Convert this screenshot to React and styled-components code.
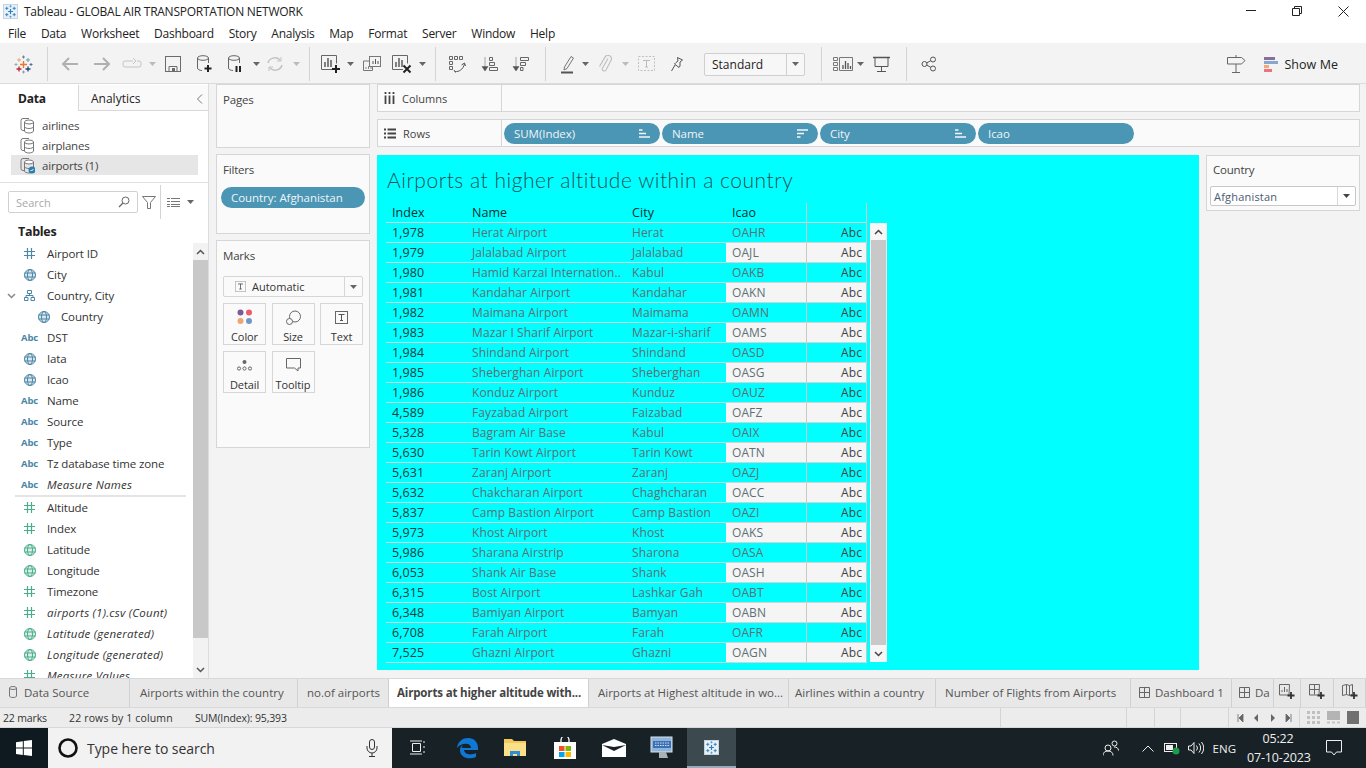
import React from "react";
import styled, { createGlobalStyle } from "styled-components";

const Global = createGlobalStyle`
  html, body { margin: 0; padding: 0; background: #fff; }
  * { box-sizing: border-box; }
  body { font-family: "Open Sans", "Noto Sans", sans-serif; font-size: 12px; color: #222; }
`;

const Page = styled.div`
  width: 1366px; height: 768px; overflow: hidden; display: flex; flex-direction: column; background: #f3f3f3;
`;
const TitleBar = styled.div`
  height: 24px; background: #fff; display: flex; align-items: center; padding: 0 0 2px 3px; font-size: 12px; letter-spacing: -0.25px; color: #222; flex: none;
`;
const TitleText = styled.span` margin-left: 6px; `;
const WinControls = styled.div` margin-left: auto; display: flex; `;
const WinBtn = styled.div` width: 46px; height: 22px; display: flex; align-items: center; justify-content: center; `;
const MenuBar = styled.div`
  height: 19px; background: #fff; display: flex; flex: none; align-items: center; padding-left: 8px; gap: 14.9px; letter-spacing: -0.25px;
`;
const ToolBar = styled.div`
  height: 41px; flex: none; display: flex; align-items: center; padding: 2px 0 0 4px; background: #f3f3f3; border-bottom: 1px solid #dcdcdc;
`;
const Tool = styled.div`
  width: ${p => p.$w}px; height: 24px; flex: none; display: flex; align-items: center; justify-content: center;
`;
const SepBox = styled.div`
  width: ${p => p.$w}px; flex: none; height: 34px; display: flex; justify-content: center;
  &::before { content: ""; width: 1px; height: 100%; background: #d4d4d4; }
`;
const StdBox = styled.div`
  width: 101px; height: 23px; margin: 0 6px 0 16px; border: 1px solid #cfcfcf; border-radius: 2px; display: flex; align-items: center; background: #f7f7f7; flex: none;
`;
const StdText = styled.span` flex: 1; padding-left: 7px; font-size: 12px; `;
const StdCaret = styled.span` width: 18px; height: 100%; border-left: 1px solid #cfcfcf; display: flex; align-items: center; justify-content: center; `;
const ToolRight = styled.div` margin-left: auto; display: flex; align-items: center; padding-right: 28px; font-size: 12.5px; letter-spacing: 0.05px; `;
const ShowMeText = styled.span` margin-left: 6px; `;

const Main = styled.div` height: 594px; flex: none; display: flex; `;
const LeftPanel = styled.div`
  width: 209px; flex: none; background: #fff; border-right: 1px solid #dcdcdc; display: flex; flex-direction: column; overflow: hidden;
`;
const TabsRow = styled.div` height: 26px; flex: none; display: flex; margin-top: 1px; `;
const DataTab = styled.div` width: 78px; padding-left: 18px; font-weight: 700; line-height: 27px; letter-spacing: -0.2px; `;
const AnalyticsTab = styled.div`
  flex: 1; display: flex; align-items: center; justify-content: space-between; padding: 2px 5px 0 12px; background: #fafafa; border-left: 1px solid #d8d8d8; border-bottom: 1px solid #d8d8d8;
`;
const Sources = styled.div` flex: none; padding: 4px 10px 7px 11px; border-bottom: 1px solid #e2e2e2; `;
const SourceRow = styled.div`
  height: 20px; display: flex; align-items: center; padding-left: 9px; gap: 7px; color: #444; letter-spacing: -0.2px; font-size: 11.5px;
  background: ${p => (p.$on ? "#e6e6e6" : "transparent")};
`;
const SearchRow = styled.div` height: 39px; flex: none; display: flex; align-items: flex-start; padding: 8px 0 0 8px; `;
const SearchBox = styled.div`
  width: 130px; height: 22px; border: 1px solid #d0d0d0; border-radius: 2px; display: flex; align-items: center; justify-content: space-between; padding: 0 7px 0 7px; color: #a9a9a9; font-size: 11px;
`;
const SearchTools = styled.div` display: flex; align-items: center; height: 22px; margin-left: 1px; `;
const TablesHead = styled.div` flex: none; height: 21px; padding-left: 18px; font-weight: 700; line-height: 20px; letter-spacing: -0.3px; font-size: 12.5px; `;
const FieldArea = styled.div` flex: 1; min-height: 0; display: flex; overflow: hidden; `;
const FieldList = styled.div` flex: 1; padding-top: 0; overflow: hidden; `;
const FieldRow = styled.div`
  height: 21px; display: flex; align-items: center; padding-left: ${p => (p.$indent ? 34 : p.$chev ? 7 : 20)}px; gap: 8px; letter-spacing: ${p => (p.$i ? "0.25px" : "-0.12px")}; font-size: 11.5px; color: #333;
  font-style: ${p => (p.$i ? "italic" : "normal")};
`;
const ChevronSlot = styled.span` width: 5px; flex: none; display: flex; `;
const IconSlot = styled.span` width: 19px; flex: none; display: flex; justify-content: center; align-items: center; `;
const Abc = styled.span` font-size: 9.5px; font-weight: 700; color: #4a86a6; font-style: normal; letter-spacing: -0.2px; `;
const FieldDivider = styled.div` height: 2px; margin: 0 7px 0 15px; background: #e4e4e4; `;
const VScroll = styled.div` display: flex; flex-direction: column; flex: none; width: ${p => p.$w}px; background: ${p => p.$bg}; `;
const ScrollArrow = styled.div` height: ${p => p.$h}px; flex: none; display: flex; align-items: center; justify-content: center; `;
const ScrollThumb = styled.div` flex: ${p => (p.$h ? `none` : 1)}; height: ${p => (p.$h ? `${p.$h}px` : "auto")}; background: #c8c8c8; margin: 0 ${p => p.$m || 0}px; `;
const ScrollTail = styled.div` flex: 1; `;

const SideCol = styled.div` width: 154px; margin-left: 7px; flex: none; display: flex; flex-direction: column; gap: 6px; `;
const Card = styled.div`
  height: ${p => p.$h}px; flex: none; background: #fafafa; border: 1px solid #d6d6d6; padding: ${p => p.$p || "7px 6px"};
`;
const CardLabel = styled.div` color: #444; height: 16px; line-height: 16px; letter-spacing: -0.2px; font-size: 11.5px; `;
const Pill = styled.div`
  height: 21px; width: ${p => p.$w}px; flex: none; border-radius: 11px; background: #4b96b4; color: #eef5f8; display: flex; align-items: center; justify-content: space-between; padding: 0 10px; letter-spacing: -0.05px; font-size: 11.5px;
`;
const FilterPill = styled(Pill)` margin: 9px 0 0 -2px; `;
const MarksSelect = styled.div`
  margin-top: 12px; height: 21px; width: 140px; border: 1px solid #d6d6d6; border-radius: 2px; display: flex; align-items: center; font-size: 11px; color: #333;
`;
const MarksSelectText = styled.span` flex: 1; display: flex; align-items: center; gap: 6px; padding-left: 11px; `;
const MarksCaret = styled.span` width: 18px; height: 100%; border-left: 1px solid #d6d6d6; display: flex; align-items: center; justify-content: center; `;
const MarksGrid = styled.div` margin-top: 6px; width: 140px; display: grid; grid-template-columns: 43px 43px 43px; column-gap: 5.5px; row-gap: 6px; `;
const MarkBtn = styled.div`
  height: 42px; border: 1px solid #d6d6d6; display: flex; flex-direction: column; align-items: center; justify-content: flex-end; padding-bottom: 0; font-size: 11px; letter-spacing: -0.1px; color: #333; background: #fafafa;
`;
const MarkIcon = styled.div` height: 22px; display: flex; align-items: center; justify-content: center; margin-bottom: 1px; `;

const Work = styled.div` width: 983px; margin-left: 7px; flex: none; display: flex; flex-direction: column; `;
const Shelf = styled.div`
  height: 28px; flex: none; display: flex; background: #fafafa; border: 1px solid #d6d6d6; margin-bottom: ${p => p.$mb}px;
`;
const ShelfHead = styled.div` width: 124px; flex: none; display: flex; align-items: center; padding-left: 6px; gap: 7px; border-right: 1px solid #d6d6d6; font-size: 11px; color: #444; `;
const ShelfBody = styled.div` flex: 1; display: flex; align-items: center; gap: 2px; padding-left: 2px; `;
const VizRow = styled.div` display: flex; align-items: flex-start; `;
const Viz = styled.div` width: 822px; height: 515px; flex: none; background: #00ffff; padding: 10px 0 0 9px; `;
const VizTitle = styled.div` font-family: "Lato", "Open Sans", sans-serif; font-weight: 300; font-size: 21px; line-height: 30px; height: 38px; color: #1f5156; letter-spacing: 0.52px; padding-left: 1px; `;
const TableWrap = styled.div` display: flex; align-items: flex-end; `;
const Table = styled.div` width: 481px; flex: none; `;
const HeadRow = styled.div`
  display: grid; grid-template-columns: 80px 160px 100px 80px 61px; height: 19px; font-size: 12.5px; color: #0f3030; letter-spacing: 0.05px;
`;
const HeadCell = styled.div`
  padding-left: 6px; line-height: 20px;
  ${p => p.$line && "border-left: 1px solid #c8c8c8;"}
  ${p => p.$end && "border-right: 1px solid #c8c8c8;"}
`;
const DataRow = styled.div`
  display: grid; grid-template-columns: 80px 160px 100px 80px 61px; height: 20px; border-top: 1px solid #cfd4d4;
  &:last-child { border-bottom: 1px solid #cfd4d4; height: 21px; }
`;
const Cell = styled.div`
  padding-left: ${p => (p.$abc ? 0 : 6)}px; padding-right: ${p => (p.$abc ? 4 : 0)}px; line-height: 20px; white-space: nowrap; overflow: hidden; font-size: ${p => (p.$dark ? 12.5 : 12)}px; letter-spacing: 0.1px;
  text-align: ${p => (p.$abc ? "right" : "left")};
  color: ${p => (p.$dark ? "#1f3c3c" : p.$abc ? "#444" : "#5f6f74")};
  background: ${p => (p.$hl ? "#f5f5f5" : "transparent")};
  ${p => p.$abc && "border-left: 1px solid #c8c8c8; border-right: 1px solid #c8c8c8;"}
`;
const TableScroll = styled.div` margin-left: 3px; margin-bottom: 1px; width: 17px; height: 439px; background: #f6f6f6; display: flex; flex-direction: column; `;
const RightCol = styled.div` width: 154px; margin-left: 7px; flex: none; `;
const CountrySelect = styled.div`
  margin: 8px 0 0 -3px; width: 146px; height: 20px; background: #fff; border: 1px solid #c8c8c8; border-radius: 2px; display: flex; align-items: center; font-size: 11px; color: #4a5a72;
`;
const CountryText = styled.span` flex: 1; padding-left: 3px; letter-spacing: 0.2px; `;
const CountryCaret = styled.span` width: 18px; height: 100%; border-left: 1px solid #d8d8d8; display: flex; align-items: center; justify-content: center; `;

const TabBar = styled.div` height: 30px; flex: none; display: flex; background: #e8e8e8; border-top: 1px solid #d8d8d8; border-bottom: 1px solid #d8d8d8; color: #555; overflow: hidden; letter-spacing: 0; font-size: 11.5px; `;
const SheetTab = styled.div`
  width: ${p => p.$w}px; flex: none; display: flex; align-items: center; justify-content: ${p => (p.$c ? "center" : "flex-start")}; gap: ${p => p.$gap || 5}px; padding: 0 0 2px ${p => (p.$c ? 0 : p.$pl || 9)}px; border-right: 1px solid #d0d0d0; white-space: nowrap; overflow: hidden;
  ${p => p.$on && "background:#fff; font-weight:700; color:#444; letter-spacing:-0.15px;"}
`;
const Status = styled.div` height: 20px; flex: none; display: flex; background: #ececec; font-size: 10.5px; color: #333; letter-spacing: -0.15px; border-bottom: 1px solid #d8d8d8; `;
const StatusText = styled.div` width: ${p => p.$w}px; flex: none; padding-left: ${p => p.$p || 0}px; line-height: 20px; white-space: nowrap; letter-spacing: ${p => p.$ls || "inherit"}; `;
const StatusCell = styled.div` width: ${p => p.$w}px; flex: none; border-left: 1px solid #d4d4d4; display: flex; align-items: center; justify-content: space-around; padding: 0 3px; `;
const TaskBar = styled.div` height: 40px; flex: none; display: flex; align-items: center; background: #182126; color: #fff; `;
const TaskStart = styled.div` width: 48px; height: 40px; display: flex; align-items: center; justify-content: center; flex: none; background: #0f1a20; `;
const TaskSearch = styled.div` width: 344px; height: 40px; background: #f2f2f2; display: flex; align-items: center; color: #333; font-size: 14px; padding-left: 9px; flex: none; letter-spacing: -0.05px; `;
const TaskSearchText = styled.span` margin-left: 8px; flex: 1; `;
const TaskIcon = styled.div` width: ${p => p.$w}px; height: 40px; flex: none; display: flex; align-items: center; justify-content: center; ${p => p.$on && "background:#3c4a50; border-bottom:2px solid #9ab;"} `;
const Tray = styled.div` margin-left: auto; display: flex; align-items: center; height: 40px; font-size: 12px; color: #eee; `;
const Clock = styled.div` width: 62px; text-align: center; line-height: 19px; font-size: 12.5px; letter-spacing: -0.15px; white-space: nowrap; `;
const TrayText = styled.span` margin: 0 11px 0 9px; font-size: 11.5px; `;

/* ---------- drawn icons ---------- */
const Svg = ({ w = 20, h = 20, children }) => (
  <svg width={w} height={h} viewBox={`0 0 ${w} ${h}`} fill="none" style={{ display: "block", flex: "none" }}>{children}</svg>
);
const Caret = ({ c = "#666" }) => <Svg w={7} h={4}><path d="M0 0h7L3.5 4z" fill={c} /></Svg>;
const Cross = ({ x, y, r, c, s = 1 }) => <path d={`M${x - r} ${y}h${2 * r}M${x} ${y - r}v${2 * r}`} stroke={c} strokeWidth={s} />;
const TableauLogo = () => (
  <Svg w={19} h={19}>
    <Cross x={9.5} y={9.5} r={3.5} c="#e8762d" s={1.4} />
    <Cross x={5} y={5} r={2} c="#eda66a" s={1} />
    <Cross x={14} y={5} r={2} c="#6f9dac" s={1} />
    <Cross x={5} y={14} r={2.5} c="#c72035" s={1.3} />
    <Cross x={14} y={14} r={2.5} c="#1f457e" s={1.3} />
    <Cross x={9.5} y={2} r={1.5} c="#59879b" s={1} />
    <Cross x={9.5} y={17} r={1.5} c="#8a9fc0" s={1} />
    <Cross x={2} y={9.5} r={1.5} c="#8ab0bf" s={1} />
    <Cross x={17} y={9.5} r={1.5} c="#5a6e96" s={1} />
  </Svg>
);
const WindowIconBox = styled.span` width: 15px; height: 15px; background: #e8f1f8; border: 1px solid #c4d4e0; display: flex; align-items: center; justify-content: center; flex: none; `;
const BlueLogo = ({ s = 14 }) => (
  <svg width={s} height={s} viewBox="0 0 14 14" fill="none" style={{ display: "block" }}>
    <Cross x={7} y={7} r={2.6} c="#2d7fc0" s={1.3} />
    <Cross x={3} y={3.6} r={1.7} c="#2d7fc0" s={1} />
    <Cross x={11} y={3.6} r={1.7} c="#2d7fc0" s={1} />
    <Cross x={3} y={10.4} r={1.7} c="#2d7fc0" s={1} />
    <Cross x={11} y={10.4} r={1.7} c="#2d7fc0" s={1} />
    <Cross x={7} y={1.4} r={1.2} c="#5a9fd4" s={1} />
    <Cross x={7} y={12.6} r={1.2} c="#5a9fd4" s={1} />
  </svg>
);
const ArrowIcon = ({ dir }) => (
  <Svg w={18} h={14}>
    {dir === "l"
      ? <path d="M17 7H2M8 1L2 7l6 6" stroke="#b0b0b0" strokeWidth="2" />
      : <path d="M1 7h15M10 1l6 6-6 6" stroke="#b0b0b0" strokeWidth="2" />}
  </Svg>
);
const SwapIcon = () => (
  <Svg w={20} h={12}>
    <path d="M11 3H3a2 2 0 0 0-2 2v2a2 2 0 0 0 2 2h14a2 2 0 0 0 2-2V5a2 2 0 0 0-2-2h-2" stroke="#c4c4c4" />
    <path d="M11 0l3 3-3 3" stroke="#c4c4c4" />
  </Svg>
);
const SaveIcon = () => (
  <Svg w={17} h={17}>
    <rect x=".5" y=".5" width="15" height="15" stroke="#6b6b6b" />
    <path d="M4 15.5V10.5h8v5" stroke="#6b6b6b" /><rect x="7" y="12" width="3" height="3" fill="#6b6b6b" />
  </Svg>
);
const Cylinder = ({ children }) => (
  <Svg w={18} h={18}>
    <ellipse cx="7" cy="3" rx="5.5" ry="2.3" stroke="#666" />
    <path d="M1.5 3v10c0 1.5 2 2.4 4.5 2.5M12.5 3v5" stroke="#666" />
    {children}
  </Svg>
);
const DataPlus = () => <Cylinder><path d="M12 10v7M8.5 13.5h7" stroke="#222" strokeWidth="2" /></Cylinder>;
const DataPause = () => <Cylinder><path d="M9.5 11v6M13 11v6" stroke="#222" strokeWidth="2" /></Cylinder>;
const RefreshIcon = () => (
  <Svg w={18} h={16}>
    <path d="M2 7a7 6.5 0 0 1 12-3M16 9a7 6.5 0 0 1-12 3" stroke="#c2c2c2" strokeWidth="1.5" />
    <path d="M15 1v4h-4M3 15v-4h4" stroke="#c2c2c2" />
  </Svg>
);
const BarsBox = ({ children }) => (
  <Svg w={22} h={20}>
    <path d="M12 15.5H1.5V1.5h15v8" stroke="#666" />
    <path d="M5 13V8M8 13V4M11 13V6" stroke="#444" strokeWidth="1.3" />
    {children}
  </Svg>
);
const NewSheet = () => <BarsBox><path d="M16 11v8M12 15h8" stroke="#222" strokeWidth="2" /></BarsBox>;
const ClearSheet = () => <BarsBox><path d="M12.5 11.5l7 7M19.5 11.5l-7 7" stroke="#222" strokeWidth="2" /></BarsBox>;
const DupSheet = () => (
  <Svg w={18} h={17}>
    <rect x="6.5" y=".5" width="11" height="10" stroke="#777" />
    <path d="M10 8V5M12.5 8V3M15 8V5" stroke="#555" />
    <path d="M6 5H.5v9.5h9V11" stroke="#777" />
    <path d="M3 13v-2M5.5 13v-3M8 13v-2" stroke="#888" />
  </Svg>
);
const GroupIcon = () => (
  <Svg w={18} h={18}>
    <path d="M1.5 1.5h3v3h-3zM6.5 1.5h3v3h-3zM11.5 1.5h3v3h-3zM1.5 6.5h3v3h-3zM1.5 11.5h3v3h-3z" stroke="#666" />
    <path d="M7 16.5c4 .5 8-2 9.5-7.5" stroke="#555" />
    <path d="M13.5 10l3-2 1 3M6 15l1.5 2.5" stroke="#555" />
  </Svg>
);
const SortIcon = ({ desc }) => (
  <Svg w={18} h={16}>
    <path d="M4 1v13M1 10.5L4 15l3-4.5z" stroke="#555" fill="#555" strokeWidth=".5" />
    {desc ? (
      <path d="M8.5 1.5h8v3h-8zM8.5 6.5h5v3h-5zM8.5 11.5h2.5v3H8.5z" stroke="#666" />
    ) : (
      <path d="M8.5 1.5h3v3h-3zM8.5 6.5h5v3h-5zM8.5 11.5h8v3h-8z" stroke="#666" />
    )}
  </Svg>
);
const PenIcon = () => (
  <Svg w={14} h={19}>
    <path d="M3.5 12L10 1.5l2.5 1.5L6 13.5l-3 1.5z" stroke="#777" />
    <path d="M0 17.5h12" stroke="#555" strokeWidth="2" />
  </Svg>
);
const ClipIcon = () => (
  <Svg w={14} h={18}>
    <path d="M10 4L4.5 13.5a2 2 0 0 0 3.5 2L13 6a3.4 3.4 0 0 0-6-3.4L1.5 12" stroke="#c0c0c0" strokeWidth="1.2" transform="translate(0 -.5)" />
  </Svg>
);
const TextBoxIcon = () => (
  <Svg w={18} h={16}>
    <rect x=".5" y=".5" width="16" height="14" stroke="#c0c0c0" strokeDasharray="2 1.5" />
    <path d="M5 4.5h7M8.5 4.5v6.5M7 11h3" stroke="#bcbcbc" />
  </Svg>
);
const PinIcon = () => (
  <Svg w={14} h={16}>
    <path d="M7.5 1.5l5 2.5-2.5 2 0 4-1 1.5-4.5-3.5 1.5-1.5 2-1.5z" stroke="#555" />
    <path d="M5 9l-3.5 6" stroke="#555" />
  </Svg>
);
const ShowChart = () => (
  <Svg w={20} h={14}>
    <path d="M.5 .5h4v3h-4zM.5 5.5h4v3h-4zM.5 10.5h4v3h-4zM6.5 .5h13v13h-13z" stroke="#777" />
    <path d="M10 12V8M12.5 12V4M15 12V6M17.5 12V9" stroke="#555" strokeWidth="1.3" />
  </Svg>
);
const Present = () => (
  <Svg w={18} h={16}>
    <path d="M0 1.5h17" stroke="#555" strokeWidth="1.5" />
    <path d="M2 1.5v9h13v-9M8.5 10.5V15M4 15.5h9" stroke="#555" />
  </Svg>
);
const ShareIcon = () => (
  <Svg w={16} h={16}>
    <circle cx="3.5" cy="8" r="2.5" stroke="#555" /><circle cx="12" cy="3.5" r="2.5" stroke="#555" /><circle cx="12" cy="12.5" r="2.5" stroke="#555" />
    <path d="M5.8 7l4-2.4M5.8 9l4 2.4" stroke="#555" />
  </Svg>
);
const SignPost = () => (
  <Svg w={19} h={18}>
    <path d="M.5 2.5h14l3.5 3-3.5 3.5H.5z" stroke="#666" /><path d="M9 9v8M5 17.5h8M9 0v2" stroke="#666" />
  </Svg>
);
const ShowMeIcon = () => (
  <Svg w={14} h={15}>
    <rect width="11" height="3" fill="#8a6d9b" /><rect y="4" width="14" height="3" fill="#85a8d0" />
    <rect y="8" width="5" height="3" fill="#f2a974" /><rect y="12" width="8" height="3" fill="#f0727f" />
  </Svg>
);
const SourceIcon = ({ on }) => (
  <Svg w={15} h={17}>
    <path d="M9 1.5H3a2 2 0 0 0-2 2v8a2 2 0 0 0 2 2h1" stroke="#777" />
    <ellipse cx="9" cy="5" rx="4.5" ry="2" stroke="#777" fill="#fff" />
    <path d="M4.5 5v9c0 1 2 2 4.5 2s4.5-1 4.5-2V5M4.5 9.5c0 1 2 2 4.5 2s4.5-1 4.5-2" stroke="#777" />
    {on && <circle cx="12" cy="13" r="3.5" fill="#2b7fb0" />}
    {on && <path d="M10.5 13l1 1 2-2" stroke="#fff" />}
  </Svg>
);
const SearchGlass = () => <Svg w={12} h={12}><circle cx="7.5" cy="4.5" r="3.5" stroke="#666" /><path d="M5 7l-4 4" stroke="#666" strokeWidth="1.3" /></Svg>;
const Funnel = () => <Svg w={14} h={13}><path d="M.5 .5h13L8.5 6.5v6h-3v-6z" stroke="#777" /></Svg>;
const ListIcon = () => <Svg w={13} h={9}><path d="M0 .5h3M4 .5h9M0 3.5h3M4 3.5h9M0 6.5h3M4 6.5h9M0 8.5h3M4 8.5h9" stroke="#777" /></Svg>;
const Hash = ({ c }) => <Svg w={11} h={11}><path d="M3.5 0v11M7.5 0v11M0 3.5h11M0 7.5h11" stroke={c} strokeWidth="1.2" /></Svg>;
const Globe = ({ c }) => (
  <Svg w={12} h={12}>
    <circle cx="6" cy="6" r="5.5" stroke={c} fill={c} fillOpacity=".2" />
    <ellipse cx="6" cy="6" rx="2.5" ry="5.5" stroke={c} /><path d="M.5 4h11M.5 8h11" stroke={c} />
  </Svg>
);
const TreeIcon = ({ c }) => <Svg w={11} h={11}><path d="M3.5.5h4v3h-4zM.5 7.5h3.5v3H.5zM7 7.5h3.5v3H7zM5.5 3.5v2M2 7.5v-2h7v2" stroke={c} /></Svg>;
const Chevron = ({ up, c = "#555" }) => <Svg w={9} h={6}><path d={up ? "M1 5l3.5-3.500L8 5" : "M1 1l3.500 3.500L8 1"} stroke={c} strokeWidth="1.5" /></Svg>;
const LeftChev = () => <Svg w={7} h={10}><path d="M6 .5L1.5 5 6 9.5" stroke="#777" /></Svg>;
const ColsIcon = () => <Svg w={11} h={12}><path d="M1.5 0v2M5.5 0v2M9.5 0v2M1.5 3.5V12M5.5 3.5V12M9.5 3.5V12" stroke="#444" strokeWidth="1.8" /></Svg>;
const RowsIcon = () => <Svg w={12} h={11}><path d="M0 1.5h2M0 5.5h2M0 9.5h2M3.5 1.5H12M3.5 5.5H12M3.5 9.5H12" stroke="#444" strokeWidth="1.8" /></Svg>;
const SortTag = ({ desc }) => (
  <Svg w={11} h={9}>
    <path d={desc ? "M0 1h11M0 4.5h7M0 8h3.5" : "M0 1h3.5M0 4.5h7M0 8h11"} stroke="#f1f7fa" strokeWidth="1.6" />
  </Svg>
);
const TIcon = ({ c = "#666", s = 13 }) => (
  <svg width={s} height={s} viewBox="0 0 13 13" fill="none" style={{ display: "block" }}>
    <rect x=".5" y=".5" width="12" height="12" stroke={c} />
    <path d="M3.5 3.5h6M6.5 3.5v6M5 9.5h3" stroke="#555" />
  </svg>
);
const ColorDots = () => (
  <Svg w={16} h={16}>
    <circle cx="3.5" cy="3.5" r="3" fill="#7b5c92" /><circle cx="12" cy="3.5" r="3" fill="#ee5c6d" />
    <circle cx="3.5" cy="12" r="3" fill="#f2a36e" /><circle cx="12" cy="12" r="3" fill="#6f97c8" />
  </Svg>
);
const SizeIcon = () => <Svg w={15} h={15}><circle cx="9" cy="6.5" r="5.5" stroke="#666" /><circle cx="3.5" cy="11.5" r="3" stroke="#666" fill="#fafafa" /></Svg>;
const DetailIcon = () => <Svg w={15} h={11}><circle cx="7.5" cy="2" r="2" fill="#666" /><circle cx="2" cy="8.5" r="1.6" stroke="#666" /><circle cx="7.5" cy="8.5" r="1.6" stroke="#666" /><circle cx="13" cy="8.5" r="1.6" stroke="#666" /></Svg>;
const TooltipIcon = () => <Svg w={15} h={14}><path d="M.5 .5h14v9.5h-2.5v3l-3.5-3H.5z" stroke="#666" /></Svg>;
const DbSmall = () => <Svg w={8} h={12}><ellipse cx="4" cy="2" rx="3.5" ry="1.5" stroke="#777" /><path d="M.5 2v8c0 2 7 2 7 0V2" stroke="#777" /></Svg>;
const Dash = () => <Svg w={11} h={11}><path d="M.5 .5h10v10H.5zM5.5 .5v10M.5 5.5h10" stroke="#666" /></Svg>;
const SheetAdd = ({ kind }) => (
  <Svg w={16} h={16}>
    {kind === "s" && <path d="M10 11H.5V.5h10zM3 8V6M5.5 8V3M8 8V5" stroke="#666" />}
    {kind === "d" && <path d="M10 11H.5V.5h10zM5.5 .5v10M.5 5.5h10" stroke="#666" />}
    {kind === "m" && <path d="M.5 1.5l4 -1 3 1 3 -1v10l-3 1-3-1-4 1zM4.5 .5v10M7.5 1.5v10" stroke="#666" />}
    <path d="M12 8v7M8.5 11.5h7" stroke="#333" strokeWidth="1.8" />
  </Svg>
);
const PageNav = ({ kind }) => (
  <Svg w={7} h={8}>
    {kind === "first" && <path d="M1 0v8M6 0v8L2 4z" stroke="#666" fill="#666" strokeWidth=".8" />}
    {kind === "prev" && <path d="M5 0v8L1 4z" fill="#666" />}
    {kind === "next" && <path d="M2 0v8l4-4z" fill="#666" />}
    {kind === "last" && <path d="M6 0v8M1 0v8l4-4z" stroke="#666" fill="#666" strokeWidth=".8" />}
  </Svg>
);
const ViewDots = () => <Svg w={13} h={13}><path d="M0 1.5h13M0 6.5h13M0 11.5h13" stroke="#c0c0c0" strokeWidth="3" strokeDasharray="3 2" /></Svg>;
const ViewMid = () => <Svg w={13} h={13}><rect width="13" height="9" fill="#b4b4b4" /><path d="M0 11.5h13" stroke="#c4c4c4" strokeWidth="2" strokeDasharray="3 2" /></Svg>;
const ViewFull = () => <Svg w={12} h={13}><rect width="12" height="13" fill="#707070" /></Svg>;

const WinLogo = () => <Svg w={16} h={16}><path d="M0 2.2L6.8 1.2v6.4H0zM7.8 1L16 0v7.6H7.8zM0 8.6h6.800v6.3L0 14zM7.800 8.600H16V16l-8.200-1.100z" fill="#fff" /></Svg>;
const Cortana = () => <Svg w={22} h={22}><circle cx="11" cy="11" r="8.5" stroke="#111" strokeWidth="2.6" /></Svg>;
const Mic = () => <Svg w={12} h={18}><rect x="3.5" y=".5" width="5" height="10" rx="2.5" stroke="#333" /><path d="M1 7v2a5 5 0 0 0 10 0V7M6 14v3M3 17.5h6" stroke="#333" /></Svg>;
const TaskView = () => <Svg w={16} h={16}><path d="M2.5 3.5h8v8h-8zM0 1h12M0 14h12M14 1v2M14 6v2M14 11v2" stroke="#eee" /></Svg>;
const Edge = () => <Svg w={22} h={22}><path d="M1 11C2 4 7 1 12 1c6 0 10 4 10 10v2H8c.5 4 6 6 12 3v4c-7 3-16 1-16-7 0-2 1-4 3-5 -1 1-1 2-1 3h9c0-5-9-6-14 0z" fill="#0f78d4" /></Svg>;
const Folder = () => <Svg w={22} h={20}><path d="M0 1h8l2 2h12v15H0z" fill="#f3c95c" /><path d="M0 5h22v13H0z" fill="#fbe08a" /><path d="M6 18v-5h10v5h-3v-2h-4v2z" fill="#2f8fd0" /></Svg>;
const Store = () => <Svg w={22} h={22}><path d="M7 6V3a4 4 0 0 1 8 0v3" stroke="#fff" strokeWidth="1.3" /><rect y="5" width="22" height="17" fill="#fff" /><rect x="5" y="9" width="5.5" height="5" fill="#f25022" /><rect x="11.5" y="9" width="5.5" height="5" fill="#7fba00" /><rect x="5" y="15" width="5.5" height="5" fill="#00a4ef" /><rect x="11.5" y="15" width="5.5" height="5" fill="#ffb900" /></Svg>;
const Mail = () => <Svg w={24} h={18}><path d="M0 5L12 0l12 5v13H0z" fill="#fff" /><path d="M0 6l12 6 12-6-12 2z" fill="#182126" /></Svg>;
const Remote = () => <Svg w={24} h={24}><rect x="1" y="1" width="21" height="15" fill="#8fb4d8" stroke="#d8e4ee" /><rect x="3" y="5" width="18" height="7" fill="#3d6fb4" /><path d="M5 7h14M5 9.5h14" stroke="#cfe0f2" strokeDasharray="1.5 1" /><path d="M9 16h7l2 6H9z" fill="#aab2b8" /></Svg>;
const People = () => <Svg w={16} h={16}><circle cx="5" cy="8" r="3" stroke="#eee" /><path d="M0 15.5c0-3 2-4.5 5-4.5s5 1.5 5 4.5" stroke="#eee" /><circle cx="11.5" cy="3.5" r="2.5" stroke="#eee" /><path d="M11 7c2.5 0 4.5 1 4.5 3.5" stroke="#eee" /></Svg>;
const UpChev = () => <Svg w={12} h={7}><path d="M.5 6.5L6 1l5.5 5.5" stroke="#eee" /></Svg>;
const Battery = () => <Svg w={16} h={14}><rect x=".5" y="2.5" width="12" height="8" stroke="#eee" /><rect x="2" y="4" width="7" height="5" fill="#eee" /><circle cx="12" cy="10" r="3.5" fill="#1d9a4a" /></Svg>;
const Speaker = () => <Svg w={16} h={14}><path d="M.5 5h2.5l3-3.5v11L3 9H.5z" stroke="#eee" /><path d="M8.5 4.5a4 4 0 0 1 0 5M11 2.5a7 7 0 0 1 0 9M13.5 1a10 10 0 0 1 0 12" stroke="#eee" /></Svg>;
const Notify = () => <Svg w={16} h={16}><path d="M.5 .5h15v11.5h-5l-2.5 3-2.5-3h-5z" stroke="#eee" /></Svg>;
const WinMin = () => <Svg w={10} h={2}><path d="M0 .5h10" stroke="#222" /></Svg>;
const WinMax = () => <Svg w={10} h={10}><path d="M2.5 2.5v-2h7v7h-2M.5 2.5h7v7h-7z" stroke="#222" /></Svg>;
const WinClose = () => <Svg w={11} h={11}><path d="M.5 .5l10 10M10.5 .5l-10 10" stroke="#222" /></Svg>;

/* ---------- data ---------- */
const menus = ["File", "Data", "Worksheet", "Dashboard", "Story", "Analysis", "Map", "Format", "Server", "Window", "Help"];
const BLUE = "#4a86a6";
const GREEN = "#4aad8a";
const fields = [
  ["hash", "Airport ID", BLUE], ["globe", "City", BLUE], ["tree", "Country, City", BLUE],
  ["globe", "Country", BLUE, 0, 1], ["abc", "DST"], ["globe", "Iata", BLUE], ["globe", "Icao", BLUE],
  ["abc", "Name"], ["abc", "Source"], ["abc", "Type"], ["abc", "Tz database time zone"], ["abc", "Measure Names", null, 1],
  "divider",
  ["hash", "Altitude", GREEN], ["hash", "Index", GREEN], ["globe", "Latitude", GREEN], ["globe", "Longitude", GREEN],
  ["hash", "Timezone", GREEN], ["hash", "airports (1).csv (Count)", GREEN, 1], ["globe", "Latitude (generated)", GREEN, 1],
  ["globe", "Longitude (generated)", GREEN, 1], ["hash", "Measure Values", GREEN, 1],
];
const rows = [
  ["1,978", "Herat Airport", "Herat", "OAHR"], ["1,979", "Jalalabad Airport", "Jalalabad", "OAJL"],
  ["1,980", "Hamid Karzai Internation..", "Kabul", "OAKB"], ["1,981", "Kandahar Airport", "Kandahar", "OAKN"],
  ["1,982", "Maimana Airport", "Maimama", "OAMN"], ["1,983", "Mazar I Sharif Airport", "Mazar-i-sharif", "OAMS"],
  ["1,984", "Shindand Airport", "Shindand", "OASD"], ["1,985", "Sheberghan Airport", "Sheberghan", "OASG"],
  ["1,986", "Konduz Airport", "Kunduz", "OAUZ"], ["4,589", "Fayzabad Airport", "Faizabad", "OAFZ"],
  ["5,328", "Bagram Air Base", "Kabul", "OAIX"], ["5,630", "Tarin Kowt Airport", "Tarin Kowt", "OATN"],
  ["5,631", "Zaranj Airport", "Zaranj", "OAZJ"], ["5,632", "Chakcharan Airport", "Chaghcharan", "OACC"],
  ["5,837", "Camp Bastion Airport", "Camp Bastion", "OAZI"], ["5,973", "Khost Airport", "Khost", "OAKS"],
  ["5,986", "Sharana Airstrip", "Sharona", "OASA"], ["6,053", "Shank Air Base", "Shank", "OASH"],
  ["6,315", "Bost Airport", "Lashkar Gah", "OABT"], ["6,348", "Bamiyan Airport", "Bamyan", "OABN"],
  ["6,708", "Farah Airport", "Farah", "OAFR"], ["7,525", "Ghazni Airport", "Ghazni", "OAGN"],
];

const FieldIcon = ({ t, c }) => {
  if (t === "hash") return <Hash c={c} />;
  if (t === "globe") return <Globe c={c} />;
  if (t === "tree") return <TreeIcon c={c} />;
  return <Abc>Abc</Abc>;
};

export default function App() {
  return (
    <Page>
      <Global />
      <TitleBar>
        <WindowIconBox><BlueLogo s={13} /></WindowIconBox>
        <TitleText>Tableau - GLOBAL AIR TRANSPORTATION NETWORK</TitleText>
        <WinControls>
          <WinBtn><WinMin /></WinBtn>
          <WinBtn><WinMax /></WinBtn>
          <WinBtn><WinClose /></WinBtn>
        </WinControls>
      </TitleBar>
      <MenuBar>{menus.map(m => <span key={m}>{m}</span>)}</MenuBar>
      <ToolBar>
        <Tool $w={38}><TableauLogo /></Tool>
        <SepBox $w={10} />
        <Tool $w={36}><ArrowIcon dir="l" /></Tool>
        <Tool $w={28}><ArrowIcon dir="r" /></Tool>
        <Tool $w={32}><SwapIcon /></Tool>
        <Tool $w={8}><Caret c="#bbb" /></Tool>
        <Tool $w={34}><SaveIcon /></Tool>
        <Tool $w={30}><DataPlus /></Tool>
        <Tool $w={32}><DataPause /></Tool>
        <Tool $w={8}><Caret /></Tool>
        <Tool $w={30}><RefreshIcon /></Tool>
        <Tool $w={12}><Caret c="#bbb" /></Tool>
        <SepBox $w={14} />
        <Tool $w={30}><NewSheet /></Tool>
        <Tool $w={8}><Caret /></Tool>
        <Tool $w={36}><DupSheet /></Tool>
        <Tool $w={24}><ClearSheet /></Tool>
        <Tool $w={16}><Caret /></Tool>
        <SepBox $w={10} />
        <Tool $w={34}><GroupIcon /></Tool>
        <Tool $w={32}><SortIcon /></Tool>
        <Tool $w={30}><SortIcon desc /></Tool>
        <SepBox $w={18} />
        <Tool $w={28}><PenIcon /></Tool>
        <Tool $w={6}><Caret /></Tool>
        <Tool $w={34}><ClipIcon /></Tool>
        <Tool $w={6}><Caret c="#bbb" /></Tool>
        <Tool $w={38}><TextBoxIcon /></Tool>
        <Tool $w={22}><PinIcon /></Tool>
        <StdBox>
          <StdText>Standard</StdText>
          <StdCaret><Caret /></StdCaret>
        </StdBox>
        <SepBox $w={20} />
        <Tool $w={24}><ShowChart /></Tool>
        <Tool $w={10}><Caret /></Tool>
        <Tool $w={34}><Present /></Tool>
        <SepBox $w={14} />
        <Tool $w={32}><ShareIcon /></Tool>
        <ToolRight>
          <SignPost />
          <Tool $w={18} />
          <ShowMeIcon />
          <ShowMeText>Show Me</ShowMeText>
        </ToolRight>
      </ToolBar>

      <Main>
        <LeftPanel>
          <TabsRow>
            <DataTab>Data</DataTab>
            <AnalyticsTab>Analytics <LeftChev /></AnalyticsTab>
          </TabsRow>
          <Sources>
            <SourceRow><SourceIcon />airlines</SourceRow>
            <SourceRow><SourceIcon />airplanes</SourceRow>
            <SourceRow $on><SourceIcon on />airports (1)</SourceRow>
          </Sources>
          <SearchRow>
            <SearchBox>Search <SearchGlass /></SearchBox>
            <SearchTools>
              <Tool $w={20}><Funnel /></Tool>
              <SepBox $w={3} />
              <Tool $w={22}><ListIcon /></Tool>
              <Tool $w={13}><Caret /></Tool>
            </SearchTools>
          </SearchRow>
          <TablesHead>Tables</TablesHead>
          <FieldArea>
            <FieldList>
              {fields.map((f, i) => f === "divider" ? <FieldDivider key={i} /> : (
                <FieldRow key={f[1]} $i={f[3]} $indent={f[4]} $chev={f[0] === "tree"}>
                  {f[0] === "tree" && <ChevronSlot><Chevron c="#888" /></ChevronSlot>}
                  <IconSlot><FieldIcon t={f[0]} c={f[2]} /></IconSlot>
                  <span>{f[1]}</span>
                </FieldRow>
              ))}
            </FieldList>
            <VScroll $w={15} $bg="#f2f2f2">
              <ScrollArrow $h={17}><Chevron up /></ScrollArrow>
              <ScrollThumb $h={378} />
              <ScrollTail />
              <ScrollArrow $h={17}><Chevron /></ScrollArrow>
            </VScroll>
          </FieldArea>
        </LeftPanel>

        <SideCol>
          <Card $h={64}><CardLabel>Pages</CardLabel></Card>
          <Card $h={80}>
            <CardLabel>Filters</CardLabel>
            <FilterPill $w={144}>Country: Afghanistan</FilterPill>
          </Card>
          <Card $h={208}>
            <CardLabel>Marks</CardLabel>
            <MarksSelect>
              <MarksSelectText><TIcon c="#bbb" s={11} />Automatic</MarksSelectText>
              <MarksCaret><Caret /></MarksCaret>
            </MarksSelect>
            <MarksGrid>
              <MarkBtn><MarkIcon><ColorDots /></MarkIcon>Color</MarkBtn>
              <MarkBtn><MarkIcon><SizeIcon /></MarkIcon>Size</MarkBtn>
              <MarkBtn><MarkIcon><TIcon /></MarkIcon>Text</MarkBtn>
              <MarkBtn><MarkIcon><DetailIcon /></MarkIcon>Detail</MarkBtn>
              <MarkBtn><MarkIcon><TooltipIcon /></MarkIcon>Tooltip</MarkBtn>
            </MarksGrid>
          </Card>
        </SideCol>

        <Work>
          <Shelf $mb={7}>
            <ShelfHead><ColsIcon />Columns</ShelfHead>
            <ShelfBody />
          </Shelf>
          <Shelf $mb={8}>
            <ShelfHead><RowsIcon />Rows</ShelfHead>
            <ShelfBody>
              <Pill $w={156}>SUM(Index)<SortTag /></Pill>
              <Pill $w={156}>Name<SortTag desc /></Pill>
              <Pill $w={156}>City<SortTag /></Pill>
              <Pill $w={156}>Icao</Pill>
            </ShelfBody>
          </Shelf>
          <VizRow>
            <Viz>
              <VizTitle>Airports at higher altitude within a country</VizTitle>
              <TableWrap>
                <Table>
                  <HeadRow>
                    <HeadCell>Index</HeadCell>
                    <HeadCell>Name</HeadCell>
                    <HeadCell>City</HeadCell>
                    <HeadCell>Icao</HeadCell>
                    <HeadCell $line $end />
                  </HeadRow>
                  {rows.map((r, i) => (
                    <DataRow key={r[0]}>
                      <Cell $dark>{r[0]}</Cell>
                      <Cell>{r[1]}</Cell>
                      <Cell>{r[2]}</Cell>
                      <Cell $hl={i % 2 === 1}>{r[3]}</Cell>
                      <Cell $abc $hl={i % 2 === 1}>Abc</Cell>
                    </DataRow>
                  ))}
                </Table>
                <TableScroll>
                  <ScrollArrow $h={17}><Chevron up c="#444" /></ScrollArrow>
                  <ScrollThumb $m={1} />
                  <ScrollArrow $h={17}><Chevron c="#444" /></ScrollArrow>
                </TableScroll>
              </TableWrap>
            </Viz>
            <RightCol>
              <Card $h={56} $p="6px 6px">
                <CardLabel>Country</CardLabel>
                <CountrySelect>
                  <CountryText>Afghanistan</CountryText>
                  <CountryCaret><Caret c="#444" /></CountryCaret>
                </CountrySelect>
              </Card>
            </RightCol>
          </VizRow>
        </Work>
      </Main>

      <TabBar>
        <SheetTab $w={130} $gap={7}><DbSmall />Data Source</SheetTab>
        <SheetTab $w={168} $pl={10}>Airports within the country</SheetTab>
        <SheetTab $w={91} $pl={9}>no.of airports</SheetTab>
        <SheetTab $w={200} $pl={8} $on>Airports at higher altitude with...</SheetTab>
        <SheetTab $w={200} $pl={9}>Airports at Highest altitude in wo...</SheetTab>
        <SheetTab $w={147} $pl={6}>Airlines within a country</SheetTab>
        <SheetTab $w={195} $pl={9}>Number of Flights from Airports</SheetTab>
        <SheetTab $w={101} $pl={8}><Dash />Dashboard 1</SheetTab>
        <SheetTab $w={42} $pl={7}><Dash />Da</SheetTab>
        <SheetTab $w={27} $c><SheetAdd kind="s" /></SheetTab>
        <SheetTab $w={33} $c><SheetAdd kind="d" /></SheetTab>
        <SheetTab $w={32} $c><SheetAdd kind="m" /></SheetTab>
      </TabBar>
      <Status>
        <StatusText $w={69} $p={3}>22 marks</StatusText>
        <StatusText $w={126} $ls="0.15px">22 rows by 1 column</StatusText>
        <StatusText $w={805}>SUM(Index): 95,393</StatusText>
        <StatusCell $w={126} />
        <StatusCell $w={28} />
        <StatusCell $w={26} />
        <StatusCell $w={48} />
        <StatusCell $w={71}>
          <PageNav kind="first" /><PageNav kind="prev" /><PageNav kind="next" /><PageNav kind="last" />
        </StatusCell>
        <StatusCell $w={67}><ViewDots /><ViewMid /><ViewFull /></StatusCell>
      </Status>
      <TaskBar>
        <TaskStart><WinLogo /></TaskStart>
        <TaskSearch>
          <Cortana />
          <TaskSearchText>Type here to search</TaskSearchText>
          <Mic />
          <Tool $w={14} />
        </TaskSearch>
        <TaskIcon $w={51}><TaskView /></TaskIcon>
        <TaskIcon $w={48}><Edge /></TaskIcon>
        <TaskIcon $w={48}><Folder /></TaskIcon>
        <TaskIcon $w={52}><Store /></TaskIcon>
        <TaskIcon $w={46}><Mail /></TaskIcon>
        <TaskIcon $w={50}><Remote /></TaskIcon>
        <TaskIcon $w={49} $on><WindowIconBox><BlueLogo s={13} /></WindowIconBox></TaskIcon>
        <Tray>
          <People />
          <Tool $w={23} />
          <UpChev />
          <Tool $w={10} />
          <Battery />
          <Tool $w={8} />
          <Speaker />
          <TrayText>ENG</TrayText>
          <Clock>05:22<br />07-10-2023</Clock>
          <TaskIcon $w={50}><Notify /></TaskIcon>
          <Tool $w={7} />
        </Tray>
      </TaskBar>
    </Page>
  );
}
